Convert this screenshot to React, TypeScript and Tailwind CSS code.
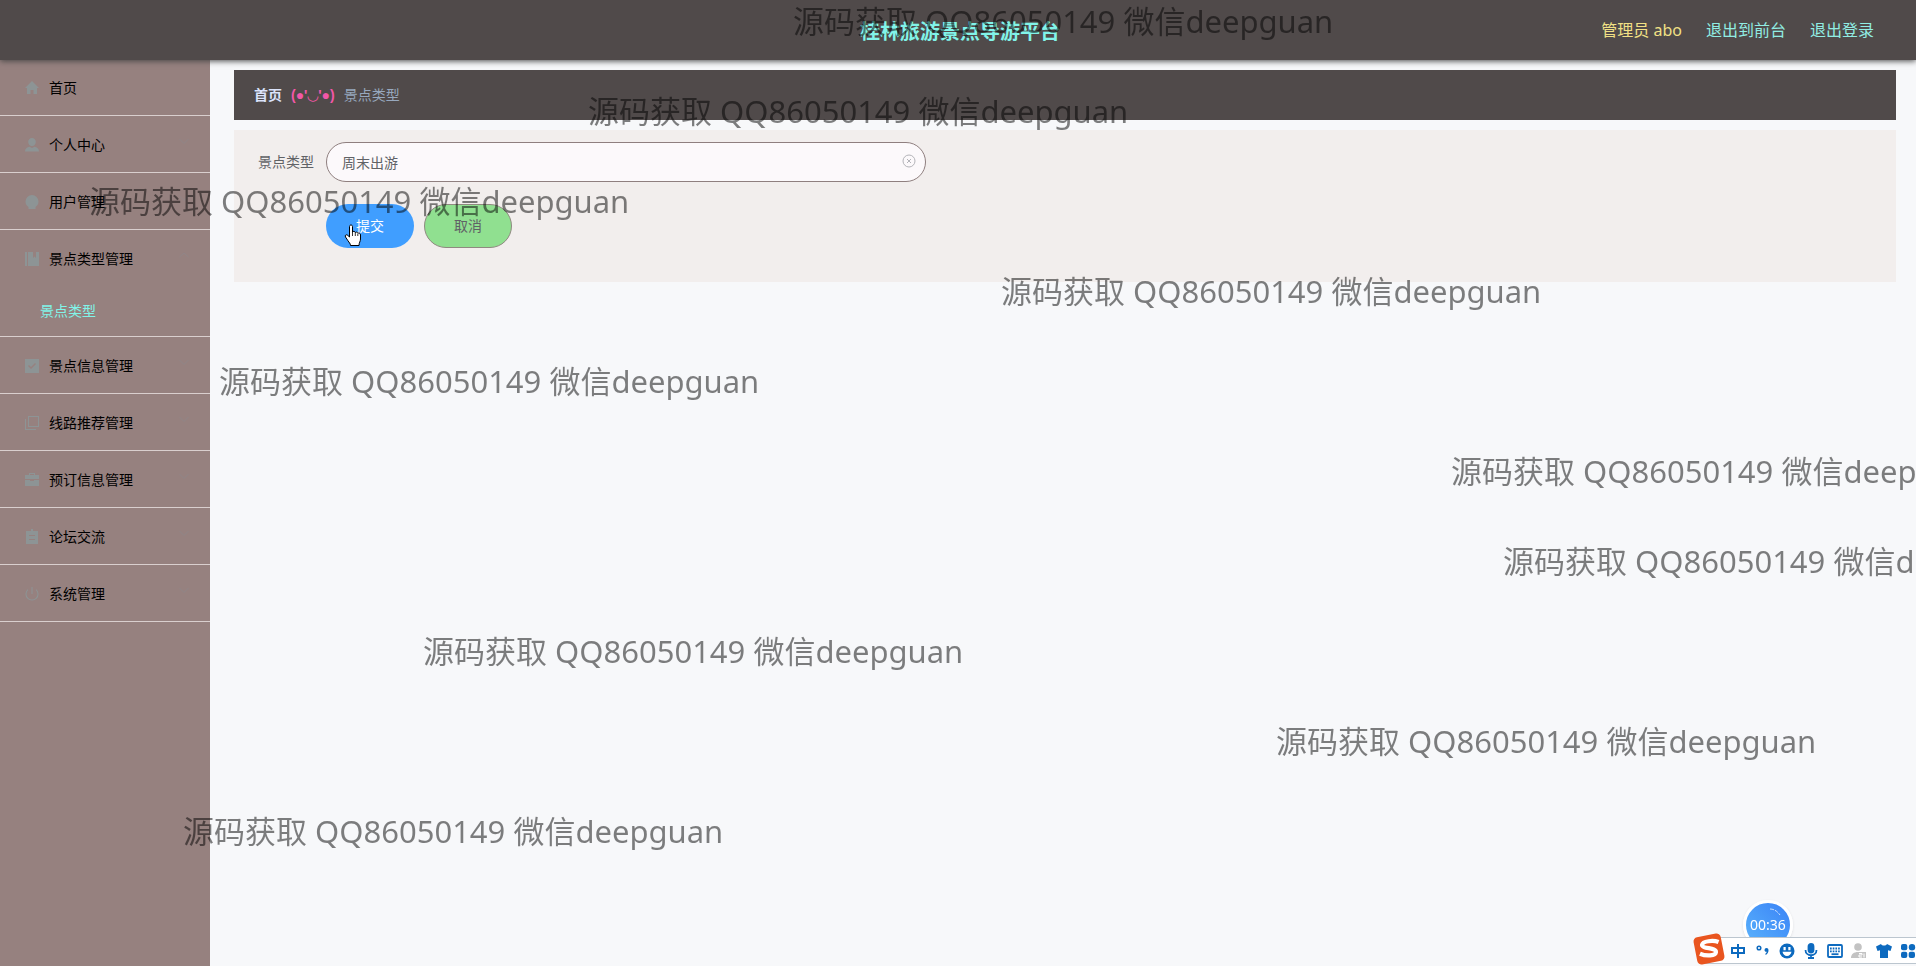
import React, { useState } from 'react';

interface MenuItem {
  label: string;
  icon: React.ReactNode;
  children?: string[];
  expandable?: boolean;
}

interface WatermarkProps {
  left: number;
  top: number;
}

const MENU: MenuItem[] = [
  { label: '首页', icon: <path d="M8 1 1 8h2v6h3.500v-4h3v4H13V8h2z" /> },
  {
    label: '个人中心',
    expandable: true,
    icon: <path d="M8 1a3.800 3.800 0 0 1 3.800 4c0 2.200-1.700 4.200-3.800 4.200S4.200 7.200 4.200 5A3.800 3.800 0 0 1 8 1zM1 14.500c0-2.800 2-4.300 4.500-4.700L8 11l2.500-1.200c2.500.4 4.500 1.900 4.500 4.700z" />,
  },
  {
    label: '用户管理',
    expandable: true,
    icon: <path d="M8 1a6.500 6.500 0 0 1 6.500 6.500c0 2.800-1.500 4.500-3 5.500V15h-7v-2c-1.500-1-3-2.700-3-5.500A6.500 6.500 0 0 1 8 1z" />,
  },
  {
    label: '景点类型管理',
    expandable: true,
    children: ['景点类型'],
    icon: <path d="M1 1h2v14H1zM4 1h5v6l1.500-1.500L12 7V1h3v14H4z" />,
  },
  {
    label: '景点信息管理',
    expandable: true,
    icon: <path fillRule="evenodd" d="M1 1h14v14H1zM4 8l3 3 5-5-1-1-4 4-2-2z" />,
  },
  {
    label: '线路推荐管理',
    expandable: true,
    icon: <path fillRule="evenodd" d="M4 1h11v11H4zM5 2v9h9V2zM1 4h1v10h10v1H1z" />,
  },
  {
    label: '预订信息管理',
    expandable: true,
    icon: <path d="M5 3V1h6v2h4v4H1V3zM6 2v1h4V2zM1 8h5v1h4V8h5v6H1z" />,
  },
  {
    label: '论坛交流',
    expandable: true,
    icon: <path fillRule="evenodd" d="M7 0h2v2h5v13H2V2h5zM5 6v1h6V6zM5 10v1h6v-1z" />,
  },
  {
    label: '系统管理',
    expandable: true,
    icon: <path fillRule="evenodd" d="M4 3v1.300a5.500 5.500 0 1 0 8 0V3a6.500 6.500 0 1 1-8 0zM7.500 1h1v7h-1z" />,
  },
];

const WATERMARKS: WatermarkProps[] = [
  { left: 793, top: 0 },
  { left: 588, top: 90 },
  { left: 89, top: 180 },
  { left: 1001, top: 270 },
  { left: 219, top: 360 },
  { left: 1451, top: 450 },
  { left: 1503, top: 540 },
  { left: 423, top: 630 },
  { left: 1276, top: 720 },
  { left: 183, top: 810 },
];

const Header: React.FC = () => (
  <header className="relative z-10 flex h-[60px] items-center bg-[#504a4a] px-[42px] shadow-[0_1px_6px_#444444]">
    <div className="flex-1" />
    <h1 className="pt-1 pl-1 text-xl font-bold text-[#81f4e9]">桂林旅游景点导游平台</h1>
    <nav className="flex flex-1 items-center justify-end gap-6 text-base">
      <span className="text-[#f1e085]">管理员 abo</span>
      <a href="#front" className="text-[#91ede3]">退出到前台</a>
      <a href="#logout" className="text-[#91ede3]">退出登录</a>
    </nav>
  </header>
);

const Sidebar: React.FC = () => (
  <aside className="w-[210px] shrink-0 bg-[#96817f] text-sm">
    <ul>
      {MENU.map((item) => (
        <li key={item.label} className="border-b border-[#d9cfce]">
          <a
            href="#menu"
            className={`flex items-center pl-6 pr-5 text-black ${item.expandable ? 'h-14 pt-0.5' : 'h-[55px]'}`}
          >
            <svg viewBox="0 0 16 16" className="mr-[9px] size-4 fill-[#8d9495]">{item.icon}</svg>
            <span className="flex-1">{item.label}</span>
            {item.expandable && (
              <svg viewBox="0 0 12 12" className="mb-2 size-3 fill-none stroke-[#908688]">
                <path d={item.children ? 'M1.500 8 6 4l4.500 4' : 'M1.500 4 6 8.500 10.500 4'} />
              </svg>
            )}
          </a>
          {item.children?.map((child) => (
            <a key={child} href="#type" className="flex h-[50px] items-center pl-10 text-[#81f4e9]">
              {child}
            </a>
          ))}
        </li>
      ))}
    </ul>
  </aside>
);

const TypeForm: React.FC = () => {
  const [name, setName] = useState('周末出游');

  return (
    <form className="bg-[#f2eeed] px-6 pt-3 pb-[34px] text-sm text-[#606266]" onSubmit={(e) => e.preventDefault()}>
      <div className="flex items-center">
        <label htmlFor="type-name" className="w-[68px] shrink-0 pr-3 text-right whitespace-nowrap">景点类型</label>
        <div className="relative w-[600px]">
          <input
            id="type-name"
            value={name}
            onChange={(e) => setName(e.target.value)}
            className="h-10 w-full rounded-full border border-[#8f7f7f] bg-[#fcf9fb] px-[15px] outline-none"
          />
          <button type="button" aria-label="清空" className="absolute top-3 right-[10px]" onClick={() => setName('')}>
            <svg viewBox="0 0 14 14" className="size-[14px] fill-none stroke-[#b4b4b9]">
              <circle cx="7" cy="7" r="6" />
              <path d="m5 5 4 4M9 5 5 9" />
            </svg>
          </button>
        </div>
      </div>
      <div className="mt-[22px] flex gap-[10px] pl-[68px]">
        <div className="relative">
          <button type="submit" className="h-11 w-[88px] rounded-full bg-[#409eff] text-white">提交</button>
          <svg viewBox="0 0 18 23" className="absolute top-5 left-[18px] h-[23px] w-[18px] fill-white stroke-black">
            <path strokeLinejoin="round" d="M5.500 13V2.500c0-2 3-2 3 0V8c.5-1 2.600-.8 2.800.6.700-.9 2.300-.6 2.500.7.900-.7 2.700 0 2.700 1.700v4c0 2.500-1.500 3.500-1.500 6.500H6.500c0-2-1.500-3-2.500-4.700L1.500 13c-1-1.800 1-3 2.300-1.600z" />
            <path d="M8.500 8v4M11.300 9v3M13.800 10v2" strokeWidth=".8" />
          </svg>
        </div>
        <button type="button" className="h-11 w-[88px] rounded-full border border-[#8f8a80] bg-[#90e090]">取消</button>
      </div>
    </form>
  );
};

const Watermark: React.FC<WatermarkProps> = ({ left, top }) => (
  <span
    className="absolute text-[31px] leading-[42px] whitespace-nowrap text-black/50"
    style={{ left, top }}
  >
    源码获取 QQ86050149 微信deepguan
  </span>
);

const InputMethodBar: React.FC = () => (
  <div className="fixed right-0 bottom-[2px] z-30 flex h-[27px] w-[216px] items-center justify-between border-y border-[#bcc6cf] bg-white pl-[30px] text-[#0d6abf]">
    <svg viewBox="0 0 32 32" className="absolute -top-[6px] -left-2 size-[34px]">
      <rect x="3" y="3" width="26" height="26" rx="4" fill="#e9551f" transform="rotate(-11 16 16)" />
      <path d="M25 9.500c-5-2-15-1-15.500 2.500-.4 4 13.500 2.500 13 7-.4 3.500-9 4-15 1.500" fill="none" stroke="#fff" strokeWidth="4" />
    </svg>
    <svg viewBox="0 0 16 16" className="size-4" fill="none" stroke="currentColor" strokeWidth="2">
      <path d="M2 5h12v5H2zM8 1v14" />
    </svg>
    <svg viewBox="0 0 16 16" className="size-4" fill="currentColor">
      <circle cx="5" cy="5" r="1.800" fill="none" stroke="currentColor" strokeWidth="1.500" />
      <path d="M10.500 7a2 2 0 0 1 4 0c0 2.500-1 4-3 5v-1.500c.8-.5 1.200-1 1.200-1.700-1.300.2-2.200-.6-2.200-1.800z" />
    </svg>
    <svg viewBox="0 0 16 16" className="size-4" fill="currentColor">
      <circle cx="8" cy="8" r="7.500" />
      <path d="M4.500 4h2.200v3.200H4.500zM9.300 4h2.200v3.200H9.300zM3.500 8.800h9c-.5 2.700-2.200 4.200-4.500 4.200s-4-1.500-4.500-4.200z" fill="#fff" />
    </svg>
    <svg viewBox="0 0 16 16" className="size-4" fill="none" stroke="currentColor" strokeWidth="1.800">
      <rect x="5.500" y="1" width="5" height="8.500" rx="2.500" fill="currentColor" />
      <path d="M2.500 7c0 7 11 7 11 0M8 12v3M5 15h6" />
    </svg>
    <svg viewBox="0 0 16 16" className="size-4" fill="none" stroke="currentColor" strokeWidth="1.800">
      <rect x="1" y="2" width="14" height="12" rx="1" />
      <path d="M3 5.500h10M3 8.300h10" strokeDasharray="1.700 1" />
      <path d="M4.500 11.200h7" />
    </svg>
    <svg viewBox="0 0 16 16" className="size-4" fill="#c3c3c3">
      <circle cx="7" cy="4" r="3.800" />
      <path d="M0 15c0-4 3-6 7-6h8v6z" />
      <path d="M8 10.500h3v1.500H8v2h3M13 10.500v4" fill="none" stroke="#fff" />
    </svg>
    <svg viewBox="0 0 16 16" className="size-4" fill="currentColor">
      <path d="M5 1 0 3.500 1.500 8 4 7.300V15h8V7.300l2.500.7L16 3.500 11 1c-1 2-5 2-6 0z" />
    </svg>
    <svg viewBox="0 0 16 16" className="size-4" fill="currentColor">
      <rect x="1" y="1" width="6.300" height="6.300" rx="2" />
      <circle cx="12" cy="4.200" r="3.200" />
      <rect x="1" y="8.700" width="6.300" height="6.300" rx="2" />
      <rect x="8.700" y="8.700" width="6.300" height="6.300" rx="2" />
    </svg>
  </div>
);

const App: React.FC = () => {
  return (
    <div className="flex min-h-screen flex-col bg-[#f7f8fa] font-['Noto_Sans','Noto_Sans_CJK_SC',sans-serif]">
      <Header />
      <div className="flex flex-1">
        <Sidebar />
        <main className="flex-1 pt-[10px] pr-5 pl-6">
          <nav className="mb-[10px] flex h-[50px] items-center bg-[#504a4a] px-5 text-sm">
            <a href="#home" className="font-bold text-[#dbe3fb]">首页</a>
            <span className="mx-[9px] font-['Liberation_Sans','DejaVu_Sans',sans-serif] font-bold text-[#f357a8]">
              (●'◡'●)
            </span>
            <span className="text-[#97a8be]">景点类型</span>
          </nav>
          <TypeForm />
        </main>
      </div>

      <div className="pointer-events-none fixed inset-0 z-20 overflow-hidden">
        {WATERMARKS.map((mark) => (
          <Watermark key={mark.top} {...mark} />
        ))}
      </div>

      <div className="fixed right-[123px] bottom-4 z-20 flex size-[50px] items-center justify-center rounded-full border-3 border-white bg-linear-to-tr from-[#5cb4fc] to-[#3b82f6] text-sm text-white shadow">
        00:36
        <svg viewBox="0 0 12 8" className="absolute top-[5px] right-[9px] h-2 w-3 fill-none stroke-white/70">
          <path d="M1 1c4 0 7 2 10 6" strokeDasharray="4 1" />
        </svg>
      </div>
      <InputMethodBar />
    </div>
  );
};

export default App;
